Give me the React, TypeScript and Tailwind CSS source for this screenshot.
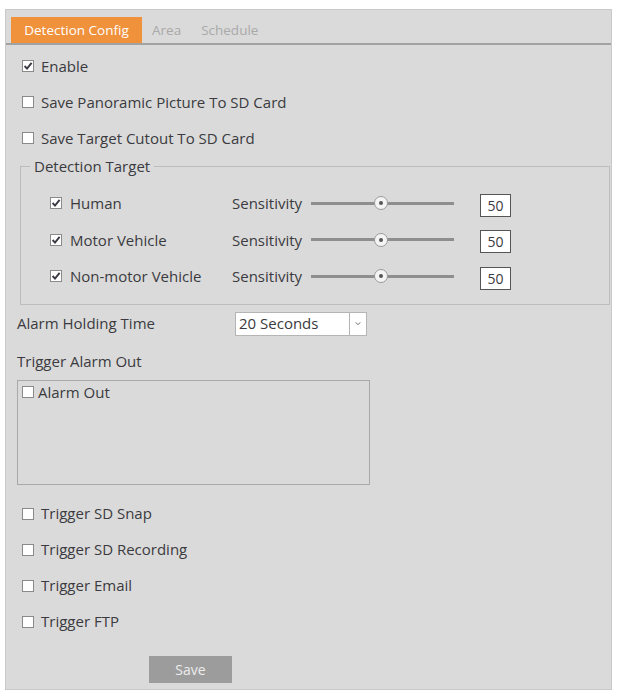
import { useState } from "react";

// ─── Bits ─────────────────────────────────────────────────────────────────────

const FONT = { fontFamily: '"Open Sans", "Noto Sans", sans-serif' };

function Box({ checked }: { checked: boolean }) {
  return (
    <span className="w-[12px] h-[12px] border border-[#8a8a8a] bg-white flex items-center justify-center flex-shrink-0">
      {checked && (
        <svg viewBox="0 0 10 10" className="w-[10px] h-[10px]">
          <path d="M1.6 5 L4 7.6 L8.6 1.8" fill="none" stroke="#3a3a44" strokeWidth="1.9" />
        </svg>
      )}
    </span>
  );
}

function CheckRow({ label, on = false }: { label: string; on?: boolean }) {
  const [v, setV] = useState(on);
  return (
    <div className="h-9 flex items-center gap-[7px] pl-[5px] cursor-pointer" onClick={() => setV(!v)}>
      <Box checked={v} />
      <span>{label}</span>
    </div>
  );
}

function Slider({ value }: { value: number }) {
  return (
    <div className="relative w-[143px] h-[14px] flex items-center">
      <div className="w-full h-[3px] bg-[#8e8e8e]" />
      <div
        className="absolute top-0 w-[14px] h-[14px] rounded-full border border-[#9a9a9a] bg-[#f4f4f4] flex items-center justify-center"
        style={{ left: `calc(${value}% - 7px)` }}
      >
        <div className="w-[4px] h-[4px] rounded-full bg-[#555]" />
      </div>
    </div>
  );
}

function TargetRow({ label }: { label: string }) {
  const [v, setV] = useState(true);
  return (
    <div className="h-[36.5px] flex items-center">
      <div className="w-[211px] flex items-center gap-[8px] pl-[29px] cursor-pointer" onClick={() => setV(!v)}>
        <Box checked={v} />
        <span>{label}</span>
      </div>
      <span className="w-[79px]">Sensitivity</span>
      <Slider value={49} />
      <div className="ml-[26px] w-[31px] h-[23px] translate-y-[2px] border border-[#555] bg-white flex items-center justify-center text-[14px]">
        50
      </div>
    </div>
  );
}

// ─── Page ─────────────────────────────────────────────────────────────────────

export default function App() {
  return (
    <div className="w-[618px] h-[692px] bg-white pt-[9px] pl-[5px]" style={FONT}>
      <div className="w-[607px] h-[681px] bg-[#dadada] border border-[#c9c9c9] text-[15px] text-[#3b3a40]">

        {/* Tabs */}
        <div className="h-[35px] pt-[7px] pl-[5px] flex items-end border-b-2 border-[#a2a2a2]">
          <div className="h-[26px] w-[131px] bg-[#f0913b] text-white text-[13.5px] flex items-center justify-center">Detection Config</div>
          <div className="h-[26px] ml-[10px] text-[#a9a9a9] text-[13.5px] flex items-center">Area</div>
          <div className="h-[26px] ml-[20px] text-[#a9a9a9] text-[13.5px] flex items-center">Schedule</div>
        </div>

        <div className="pl-[11px] pt-[3px]">
          <CheckRow label="Enable" on />
          <CheckRow label="Save Panoramic Picture To SD Card" />
          <CheckRow label="Save Target Cutout To SD Card" />

          {/* Detection target */}
          <fieldset className="mt-[1px] ml-[3px] mr-[1px] border border-[#bdbdbd] pb-[9px]">
            <legend className="ml-[9px] px-1 leading-[18px]">Detection Target</legend>
            <div className="pt-[10px]">
              <TargetRow label="Human" />
              <TargetRow label="Motor Vehicle" />
              <TargetRow label="Non-motor Vehicle" />
            </div>
          </fieldset>

          {/* Holding time */}
          <div className="h-[38px] flex items-center">
            <span className="w-[218px]">Alarm Holding Time</span>
            <div className="w-[132px] h-[24px] bg-white border border-[#b5b5b5] flex">
              <span className="flex-1 pl-[3px] flex items-center">20 Seconds</span>
              <span className="w-[17px] border-l border-[#b5b5b5] flex items-center justify-center">
                <svg viewBox="0 0 8 6" className="w-[6px] h-[5px]">
                  <path d="M1 1.5 L4 4.5 L7 1.5" fill="none" stroke="#666" strokeWidth="1.3" />
                </svg>
              </span>
            </div>
          </div>

          <div className="h-[37px] flex items-center">Trigger Alarm Out</div>
          <div className="w-[353px] h-[105px] border border-[#a8a8a8] pl-[4px] pt-[4px]">
            <div className="flex items-center gap-[4px]">
              <Box checked={false} />
              <span className="leading-[14px]">Alarm Out</span>
            </div>
          </div>

          <div className="mt-[11px]">
            <CheckRow label="Trigger SD Snap" />
            <CheckRow label="Trigger SD Recording" />
            <CheckRow label="Trigger Email" />
            <CheckRow label="Trigger FTP" />
          </div>

          <div className="pt-[16px] pl-[132px]">
            <button className="w-[83px] h-[27px] bg-[#9c9c9c] text-[#ececec] text-[14px]">Save</button>
          </div>
        </div>
      </div>
    </div>
  );
}
